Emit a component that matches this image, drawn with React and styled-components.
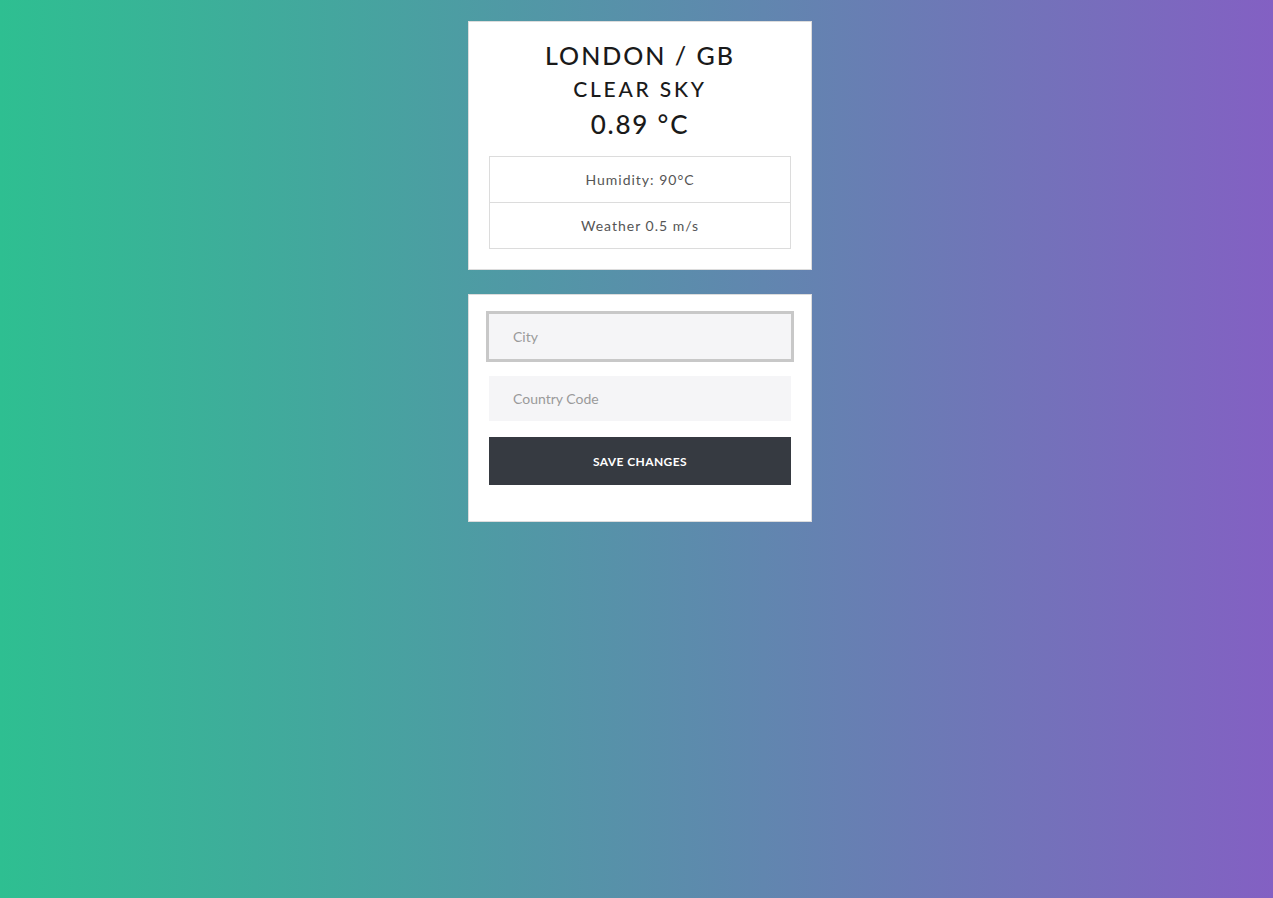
import React from 'react';
import styled, { createGlobalStyle } from 'styled-components';

const GlobalStyle = createGlobalStyle`
  html, body {
    margin: 0;
    padding: 0;
    min-height: 100%;
  }
  body {
    font-family: "Lato", "Open Sans", sans-serif;
    background: linear-gradient(to right, #2ebf91, #8360c3);
    min-height: 898px;
  }
`

const Page = styled.div`
  display: flex;
  flex-direction: column;
  align-items: center;
  padding: 21px 0 0 7px;
  gap: 24px;
`

const Card = styled.div`
  box-sizing: border-box;
  width: 344px;
  background: #fff;
  border: 1px solid #dcdcdc;
  padding: ${props => props.pad || '20px'};
`

const Title = styled.h1`
  margin: 0;
  text-align: center;
  font-weight: 500;
  color: #1a1a1a;
  letter-spacing: ${props => props.spacing || '3px'};
  font-size: ${props => props.size};
  line-height: ${props => props.lh};
`

const InfoList = styled.ul`
  list-style: none;
  margin: 14px 0 0;
  padding: 0;
  border: 1px solid #dcdcdc;
`

const InfoItem = styled.li`
  height: 45px;
  display: flex;
  align-items: center;
  justify-content: center;
  font-size: 14px;
  color: #555;
  letter-spacing: 1px;
  & + & {
    border-top: 1px solid #dcdcdc;
  }
`

const Form = styled.form`
  display: flex;
  flex-direction: column;
  gap: 17px;
`

const Input = styled.input`
  box-sizing: border-box;
  width: 100%;
  height: 45px;
  border: none;
  background: #f5f5f7;
  padding: 0 24px;
  font-family: inherit;
  font-size: 14px;
  color: #333;
  outline: ${props => (props.focused ? '3px solid #c8c8c8' : 'none')};
  outline-offset: 0;
  &::placeholder {
    color: #9a9a9a;
  }
`

const Button = styled.button`
  height: 48px;
  margin-top: -1px;
  border: none;
  background: #363a41;
  color: #fff;
  font-family: inherit;
  font-size: 12px;
  font-weight: 700;
  letter-spacing: 0.4px;
  text-transform: uppercase;
  cursor: pointer;
`

const App = () => {
  return (
    <>
      <GlobalStyle />
      <Page>
        <Card pad="16px 20px 20px">
          <Title size="25px" lh="34px" spacing="2px">LONDON / GB</Title>
          <Title size="21px" lh="34px" spacing="2.8px">CLEAR SKY</Title>
          <Title size="26px" lh="36px" spacing="1.8px">0.89 °C</Title>
          <InfoList>
            <InfoItem>Humidity: 90°C</InfoItem>
            <InfoItem>Weather 0.5 m/s</InfoItem>
          </InfoList>
        </Card>
        <Card pad="19px 20px 36px">
          <Form onSubmit={e => e.preventDefault()}>
            <Input focused placeholder="City" />
            <Input placeholder="Country Code" />
            <Button type="submit">Save changes</Button>
          </Form>
        </Card>
      </Page>
    </>
  )
}

export default App
